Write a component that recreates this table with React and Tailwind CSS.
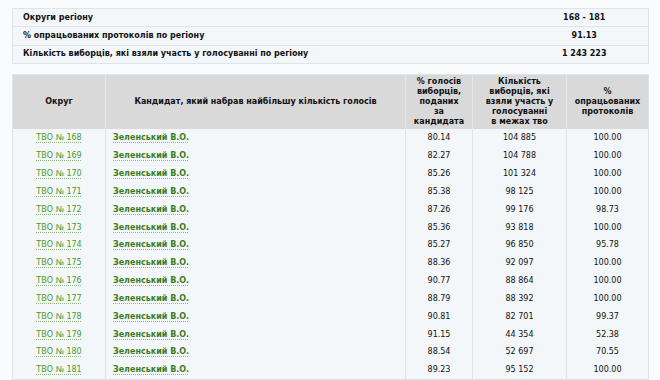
const SUMMARY = [
  ['Округи регіону', '168 - 181'],
  ['% опрацьованих протоколів по регіону', '91.13'],
  ['Кількість виборців, які взяли участь у голосуванні по регіону', '1 243 223'],
]

const ROWS = [
  [168, '80.14', '104 885', '100.00'],
  [169, '82.27', '104 788', '100.00'],
  [170, '85.26', '101 324', '100.00'],
  [171, '85.38', '98 125', '100.00'],
  [172, '87.26', '99 176', '98.73'],
  [173, '85.36', '93 818', '100.00'],
  [174, '85.27', '96 850', '95.78'],
  [175, '88.36', '92 097', '100.00'],
  [176, '90.77', '88 864', '100.00'],
  [177, '88.79', '88 392', '100.00'],
  [178, '90.81', '82 701', '99.37'],
  [179, '91.15', '44 354', '52.38'],
  [180, '88.54', '52 697', '70.55'],
  [181, '89.23', '95 152', '100.00'],
]

export default function App() {
  return (
    <div
      className="min-h-[380px] w-[660px] bg-[#f9fbfc] px-3 pt-2 text-[8px] text-[#111]"
      style={{ fontFamily: '"DejaVu Sans", Verdana, sans-serif' }}
    >
      <table className="w-[637px] border-collapse border border-[#dfe4e8] bg-[#f3f7f9]">
        <tbody>
          {SUMMARY.map(([label, value]) => (
            <tr key={label} className="h-[18.3px] border-b border-[#dfe4e8]">
              <td className="pl-[10px] font-bold">{label}</td>
              <td className="w-[128px] text-center font-bold">{value}</td>
            </tr>
          ))}
        </tbody>
      </table>

      <table className="mt-[10px] w-[637px] table-fixed border-collapse border border-[#dfe4e8] bg-[#f3f7f9]">
        <thead>
          <tr className="h-[55px] bg-[#d9d9d9] font-bold leading-[10.2px]">
            <th className="w-[93px] border-r border-[#e6e6e6]">Округ</th>
            <th className="w-[300px] border-r border-[#e6e6e6]">Кандидат, який набрав найбільшу кількість голосів</th>
            <th className="w-[67px] border-r border-[#e6e6e6]">
              % голосів<br />виборців,<br />поданих<br />за<br />кандидата
            </th>
            <th className="w-[94px] border-r border-[#e6e6e6]">
              Кількість<br />виборців, які<br />взяли участь у<br />голосуванні<br />в межах тво
            </th>
            <th>%<br />опрацьованих<br />протоколів</th>
          </tr>
        </thead>
        <tbody>
          {ROWS.map(([n, pct, voters, proc]) => (
            <tr key={n} className="h-[17.85px]">
              <td className="border-r border-[#dfe4e8] text-center">
                <a className="text-[#4c9a2a] underline decoration-dotted decoration-[#8cbf74] underline-offset-2">
                  ТВО № {n}
                </a>
              </td>
              <td className="border-r border-[#dfe4e8] pl-[7px]">
                <a className="font-bold text-[#3b7d1c] underline decoration-dotted decoration-[#8cbf74] underline-offset-2">
                  Зеленський В.О.
                </a>
              </td>
              <td className="border-r border-[#dfe4e8] text-center">{pct}</td>
              <td className="border-r border-[#dfe4e8] text-center">{voters}</td>
              <td className="text-center">{proc}</td>
            </tr>
          ))}
        </tbody>
      </table>
    </div>
  )
}
